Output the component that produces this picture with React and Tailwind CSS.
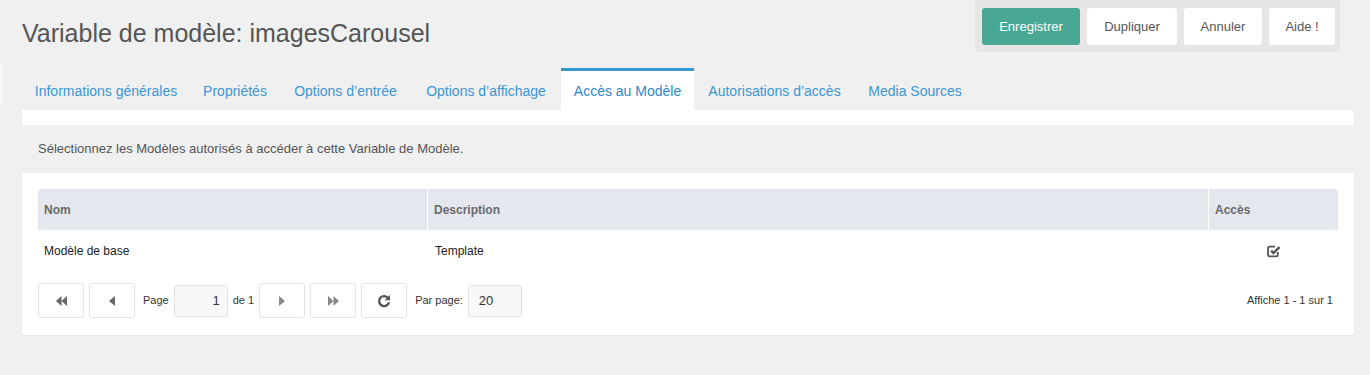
import React from 'react';

const tabs = [
  { label: 'Informations générales', w: 'w-[168px]' },
  { label: 'Propriétés', w: 'w-[90px]' },
  { label: 'Options d’entrée', w: 'w-[131px]' },
  { label: 'Options d’affichage', w: 'w-[150px]' },
  { label: 'Accès au Modèle', w: 'w-[133px]', active: true },
  { label: 'Autorisations d’accès', w: 'w-[161px]' },
  { label: 'Media Sources', w: 'w-[120px]' },
];

const FastBack = () => (
  <svg width="11" height="10" viewBox="0 0 11 10" fill="#666">
    <polygon points="5.5,0 5.5,10 0,5" />
    <polygon points="11,0 11,10 5.5,5" />
  </svg>
);

const Back = () => (
  <svg width="6" height="10" viewBox="0 0 6 10" fill="#666">
    <polygon points="6,0 6,10 0,5" />
  </svg>
);

const Forward = () => (
  <svg width="6" height="10" viewBox="0 0 6 10" fill="#888">
    <polygon points="0,0 0,10 6,5" />
  </svg>
);

const FastForward = () => (
  <svg width="11" height="10" viewBox="0 0 11 10" fill="#888">
    <polygon points="0,0 0,10 5.5,5" />
    <polygon points="5.5,0 5.5,10 11,5" />
  </svg>
);

const Refresh = () => (
  <svg width="14" height="14" viewBox="0 0 14 14" fill="none">
    <path d="M11.2 4.2A5 5 0 1 0 12 8.2" stroke="#555" strokeWidth="2.4" strokeLinecap="butt" />
    <polygon points="13,1 13,6.2 7.8,6.2" fill="#555" />
  </svg>
);

const CheckSquare = () => (
  <svg width="14" height="14" viewBox="0 0 13 13" fill="none">
    <path d="M10 7.5v2.5a1.5 1.5 0 0 1-1.5 1.5h-6A1.5 1.5 0 0 1 1 10V4a1.5 1.5 0 0 1 1.5-1.5H7.5" stroke="#555" strokeWidth="1.7" />
    <path d="M3.8 6.2l2.2 2.2L11.6 2.8" stroke="#555" strokeWidth="2.3" />
  </svg>
);

const PagerButton = ({ children }) => (
  <button className="w-[46px] h-[35px] flex items-center justify-center bg-white border border-[#e4e4e4] rounded-[3px]">
    {children}
  </button>
);

export default function App() {
  return (
    <div className="w-full min-h-[375px] bg-[#f0f0f0] text-[#555]" style={{ fontFamily: '"Liberation Sans", Arial, sans-serif' }}>
      {/* header */}
      <div className="flex items-start justify-between h-[68px] pl-[22px] pr-[30px]">
        <h1 className="mt-[18px] text-[25px] leading-[30px] font-normal text-[#555]">
          Variable de modèle: imagesCarousel
        </h1>
        <div className="flex gap-[7px] bg-[#e6e6e6] rounded-b-[5px] pt-[8px] pb-[7px] pl-[7px] pr-[5px]">
          <button className="h-[37px] w-[98px] rounded-[3px] bg-[#48a894] text-white text-[13px]">Enregistrer</button>
          <button className="h-[37px] w-[90px] rounded-[3px] bg-white text-[#555] text-[13px]">Dupliquer</button>
          <button className="h-[37px] w-[78px] rounded-[3px] bg-white text-[#555] text-[13px]">Annuler</button>
          <button className="h-[37px] w-[66px] rounded-[3px] bg-white text-[#555] text-[13px]">Aide !</button>
        </div>
      </div>

      {/* tabs */}
      <div className="flex h-[42px] [font-variant-ligatures:none]">
        <div className="w-[3px] h-[38px] -mt-[3px] bg-[#f8f8f8] rounded-r-[3px] mr-[19px]" />
        {tabs.map((t) => (
          <div
            key={t.label}
            className={`${t.w} flex items-center justify-center text-[14px] whitespace-nowrap ${
              t.active ? 'bg-white border-t-[3px] border-[#3697d6] text-[#3089c9] pt-[1px]' : 'text-[#3c96d4] pt-[4px]'
            }`}
          >
            {t.label}
          </div>
        ))}
      </div>

      {/* panel */}
      <div className="mx-[22px] mr-[16px] bg-white rounded-b-[3px] rounded-tr-[3px] shadow-[0_1px_2px_rgba(0,0,0,0.05)] pt-[15px] pb-[17px]">
        <div className="h-[48px] bg-[#f0f0f0] px-4 flex items-center text-[13px] text-[#555]">
          Sélectionnez les Modèles autorisés à accéder à cette Variable de Modèle.
        </div>
        <div className="px-4 pt-[16px]">
          <div className="grid grid-cols-[390px_781px_1fr] h-[41px] bg-[#e4e8ee] rounded-t-[4px] text-[12px] font-bold text-[#6a6a6a]">
            <div className="flex items-center px-[6px] border-r border-white">Nom</div>
            <div className="flex items-center px-[6px] border-r border-white">Description</div>
            <div className="flex items-center px-[6px]">Accès</div>
          </div>
          <div className="grid grid-cols-[390px_781px_1fr] h-[42px] text-[12px] text-[#222]">
            <div className="flex items-center px-[6px]">Modèle de base</div>
            <div className="flex items-center px-[7px]">Template</div>
            <div className="flex items-center justify-center">
              <CheckSquare />
            </div>
          </div>
          <div className="flex items-center mt-[11px] h-[35px] text-[11px] text-[#333]">
            <div className="flex gap-[5px]">
              <PagerButton><FastBack /></PagerButton>
              <PagerButton><Back /></PagerButton>
            </div>
            <span className="ml-[8px]">Page</span>
            <div className="ml-[5px] w-[54px] h-[32px] bg-[#f8f8f8] border border-[#e4e4e4] rounded-[3px] flex items-center justify-end pr-[7px] text-[13px]">1</div>
            <span className="ml-[5px]">de 1</span>
            <div className="flex gap-[5px] ml-[5px]">
              <PagerButton><Forward /></PagerButton>
              <PagerButton><FastForward /></PagerButton>
              <PagerButton><Refresh /></PagerButton>
            </div>
            <span className="ml-[8px]">Par page:</span>
            <div className="ml-[5px] w-[54px] h-[32px] bg-[#f8f8f8] border border-[#e4e4e4] rounded-[3px] flex items-center pl-[10px] text-[13px]">20</div>
            <span className="ml-auto mr-[5px]">Affiche 1 - 1 sur 1</span>
          </div>
        </div>
      </div>
    </div>
  );
}
